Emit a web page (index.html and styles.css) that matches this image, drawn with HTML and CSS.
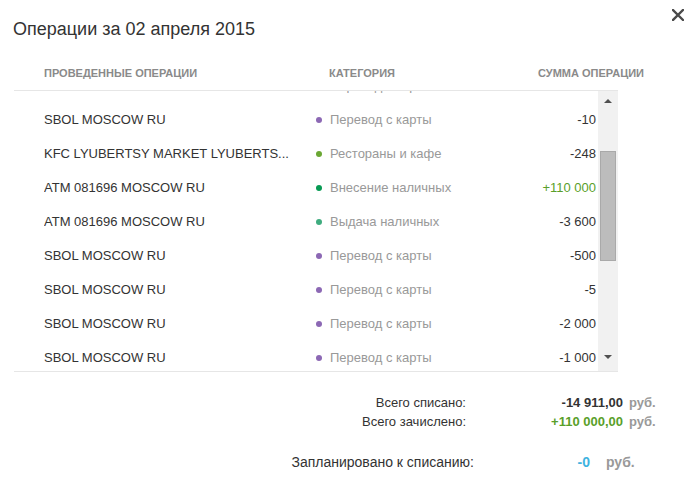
FILE: index.html
```html
<!DOCTYPE html>
<html lang="ru">
<head>
<meta charset="utf-8">
<link rel="stylesheet" href="styles.css">
</head>
<body>
<div class="dialog">
  <button class="close" aria-label="Закрыть">
    <svg width="12" height="12" viewBox="0 0 12 12"><path d="M1 1L11 11M11 1L1 11" stroke="#4a4a4a" stroke-width="2.4" stroke-linecap="square"/></svg>
  </button>
  <h1 class="title">Операции за 02 апреля 2015</h1>
  <div class="thead">
    <div class="c-name">ПРОВЕДЕННЫЕ ОПЕРАЦИИ</div>
    <div class="c-cat">КАТЕГОРИЯ</div>
    <div class="c-sum">СУММА ОПЕРАЦИИ</div>
  </div>
  <div class="tbody">
    <div class="list">
      <div class="rows">
        <div class="row"><div class="name">SBOL MOSCOW RU</div><div class="cat"><i class="dot purple"></i>Перевод с карты</div><div class="sum">-10</div></div>
        <div class="row"><div class="name">SBOL MOSCOW RU</div><div class="cat"><i class="dot purple"></i>Перевод с карты</div><div class="sum">-10</div></div>
        <div class="row"><div class="name" title="KFC LYUBERTSY MARKET LYUBERTSY RU">KFC LYUBERTSY MARKET LYUBERTS...</div><div class="cat"><i class="dot lime"></i>Рестораны и кафе</div><div class="sum">-248</div></div>
        <div class="row"><div class="name">ATM 081696 MOSCOW RU</div><div class="cat"><i class="dot green"></i>Внесение наличных</div><div class="sum plus">+110 000</div></div>
        <div class="row"><div class="name">ATM 081696 MOSCOW RU</div><div class="cat"><i class="dot teal"></i>Выдача наличных</div><div class="sum">-3 600</div></div>
        <div class="row"><div class="name">SBOL MOSCOW RU</div><div class="cat"><i class="dot purple"></i>Перевод с карты</div><div class="sum">-500</div></div>
        <div class="row"><div class="name">SBOL MOSCOW RU</div><div class="cat"><i class="dot purple"></i>Перевод с карты</div><div class="sum">-5</div></div>
        <div class="row"><div class="name">SBOL MOSCOW RU</div><div class="cat"><i class="dot purple"></i>Перевод с карты</div><div class="sum">-2 000</div></div>
        <div class="row"><div class="name">SBOL MOSCOW RU</div><div class="cat"><i class="dot purple"></i>Перевод с карты</div><div class="sum">-1 000</div></div>
      </div>
    </div>
    <div class="scrollbar">
      <span class="arrow up"></span>
      <span class="thumb"></span>
      <span class="arrow down"></span>
    </div>
  </div>
  <div class="totals">
    <div class="lbl">Всего списано:</div><div class="val">-14 911,00</div><div class="unit">руб.</div>
    <div class="lbl">Всего зачислено:</div><div class="val plus">+110 000,00</div><div class="unit">руб.</div>
  </div>
  <div class="planned">
    <div class="lbl">Запланировано к списанию:</div><div class="val blue">-0</div><div class="unit">руб.</div>
  </div>
</div>
</body>
</html>
```
FILE: styles.css
```css
* { box-sizing: border-box; }
html, body { margin: 0; padding: 0; background: #fff; }
body { font-family: "Liberation Sans", Arial, sans-serif; color: #333; width: 690px; height: 490px; overflow: hidden; }
.dialog { position: relative; padding: 18px 0 0 14px; }
.close { position: absolute; top: 9px; left: 672px; padding: 0; border: 0; background: none; width: 12px; height: 12px; line-height: 0; }
.title { margin: 0 0 0 -1px; font-size: 18px; font-weight: normal; line-height: 22px; color: #333; }
.thead { display: flex; align-items: center; height: 50px; padding: 16px 0 0 30px; font-size: 11px; font-weight: bold; color: #8a8a8a; width: 630px; }
.thead .c-name { width: 285px; }
.thead .c-cat { flex: 1; }
.thead .c-sum { text-align: right; }
.tbody { display: flex; width: 604px; height: 282px; border-top: 1px solid #e6e6e6; border-bottom: 1px solid #e6e6e6; }
.list { flex: 1; overflow: hidden; }
.rows { margin-top: -23px; }
.row { display: flex; align-items: center; height: 34px; font-size: 13px; padding-left: 30px; }
.name { width: 271px; white-space: nowrap; overflow: hidden; padding-right: 8px; color: #333; }
.cat { flex: 1; display: flex; align-items: center; color: #999; }
.dot { display: inline-block; width: 6px; height: 6px; border-radius: 50%; margin: 1px 8px 0 1px; }
.purple { background: #8c68b4; }
.lime { background: #6aa733; }
.green { background: #079a53; }
.teal { background: #3fac7f; }
.sum { text-align: right; padding-right: 2px; color: #333; }
.plus { color: #5a9f2a; }
.scrollbar { position: relative; width: 20px; background: #f1f1f1; display: flex; flex-direction: column; align-items: center; }
.arrow { width: 0; height: 0; border-left: 4px solid transparent; border-right: 4px solid transparent; }
.arrow.up { border-bottom: 4px solid #505050; margin-top: 8px; }
.arrow.down { border-top: 4px solid #505050; margin-top: auto; margin-bottom: 12px; }
.thumb { position: absolute; top: 60px; left: 2px; width: 16px; height: 110px; background: #bcbcbc; border: 1px solid #a9a9a9; }
.totals { display: grid; grid-template-columns: 452px 151px auto; column-gap: 6px; margin-top: 21px; font-size: 13px; line-height: 19px; }
.totals .lbl, .planned .lbl { text-align: right; color: #333; }
.totals .val { text-align: right; font-weight: bold; color: #333; }
.totals .val.plus { color: #5a9f2a; }
.unit { font-weight: bold; color: #999; }
.planned { display: grid; grid-template-columns: 460px 100px auto; column-gap: 16px; margin-top: 22px; font-size: 14px; line-height: 19px; }
.planned .val { text-align: right; font-weight: bold; }
.blue { color: #3fb3e0; }
```
